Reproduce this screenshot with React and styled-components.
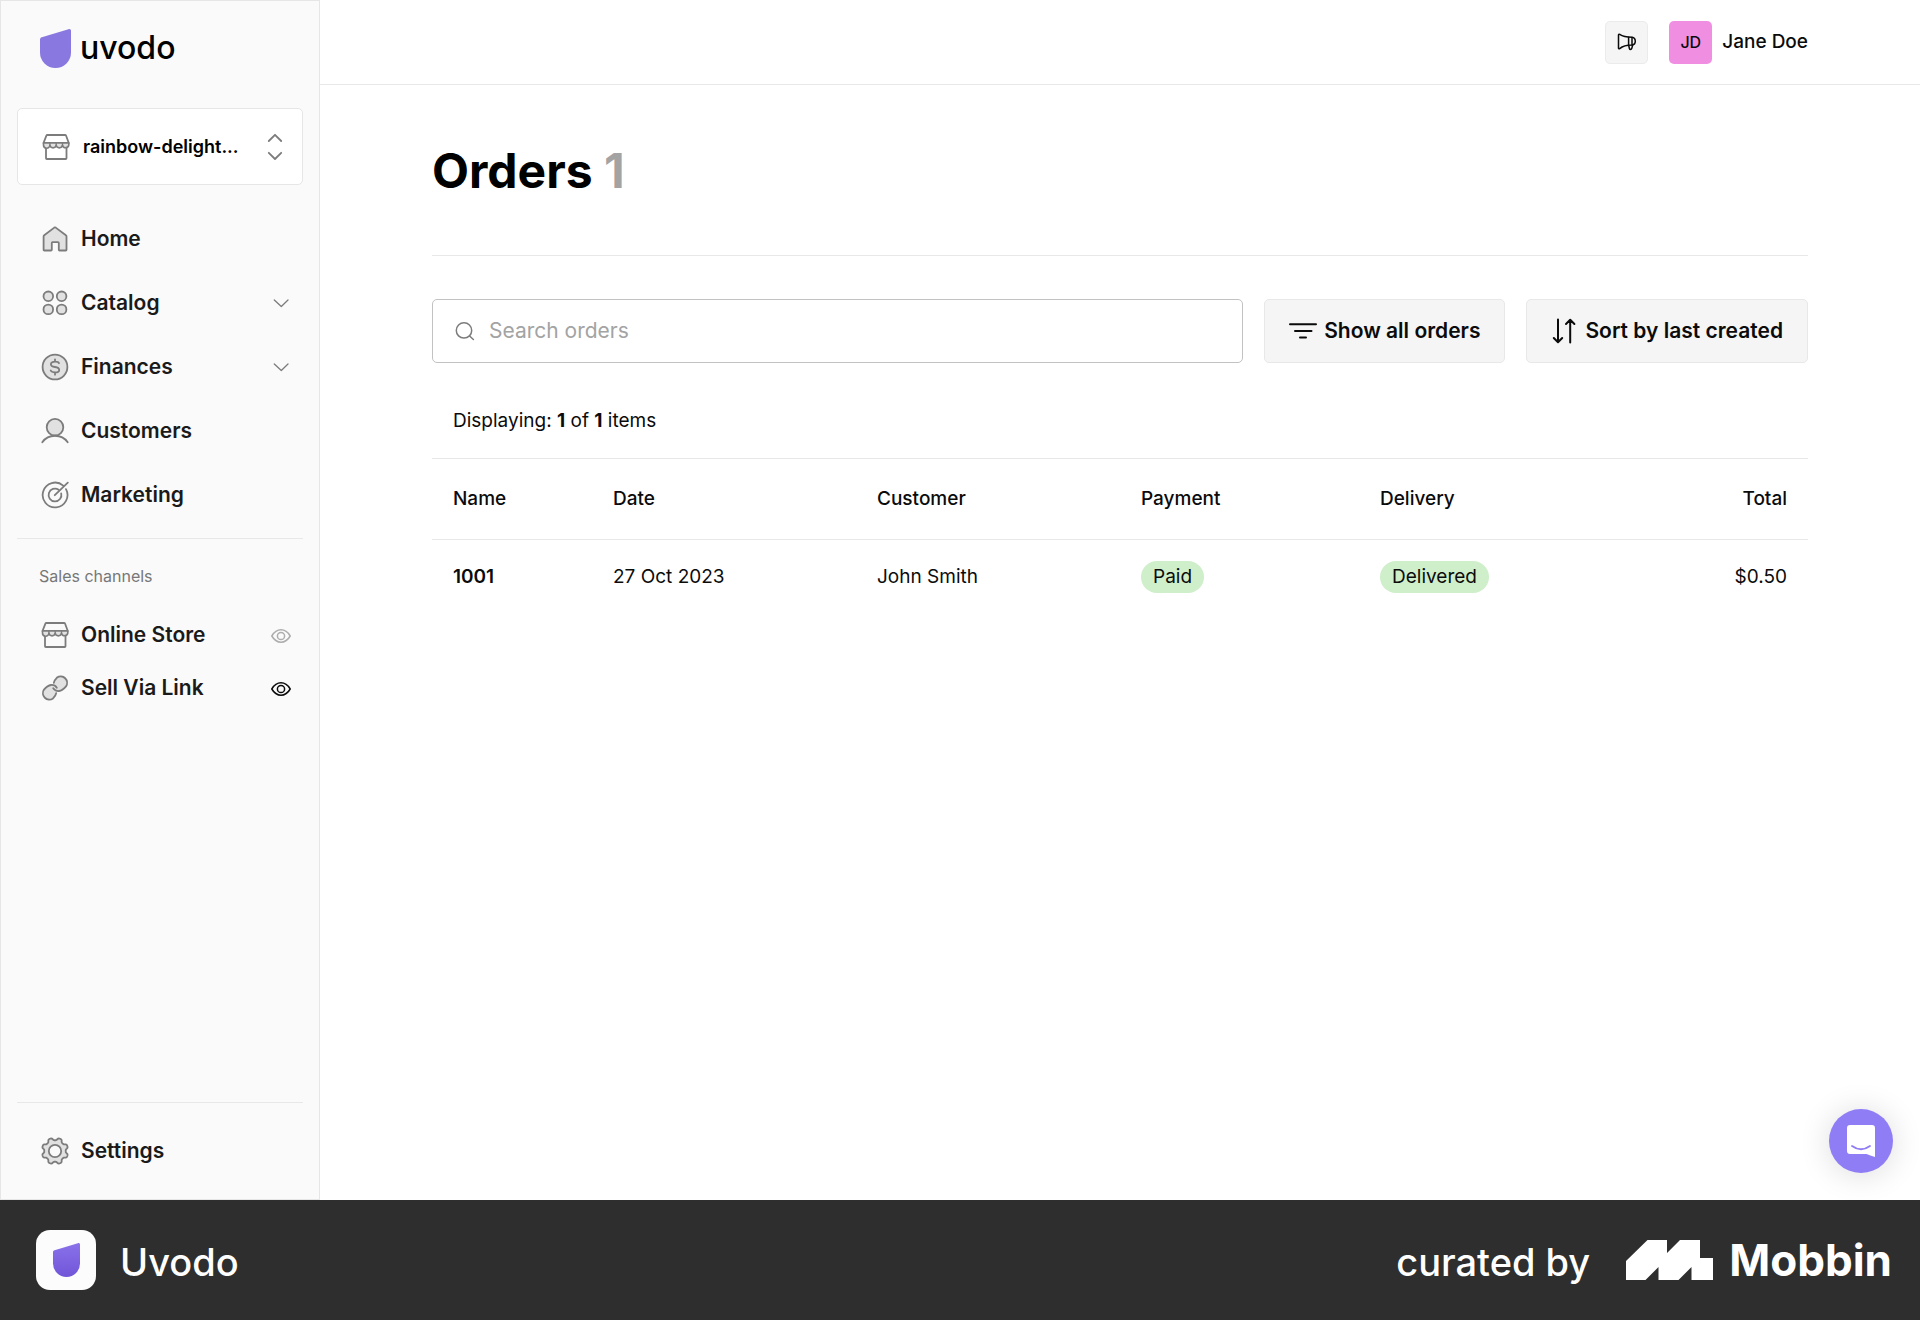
import React from "react";
import styled, { createGlobalStyle } from "styled-components";

const GlobalStyle = createGlobalStyle`
  * {
    box-sizing: border-box;
  }

  body {
    margin: 0;
    color: #0b0b0b;
    background: #fff;
    font-family: Inter, "Liberation Sans", sans-serif;
    font-size: 19px;
    line-height: 24px;
  }

  button,
  input {
    font: inherit;
    color: inherit;
  }

  svg {
    display: block;
    flex: none;
    fill: none;
    stroke-linecap: round;
    stroke-linejoin: round;
  }
`;

const Page = styled.div`
  display: flex;
  flex-direction: column;
  min-height: 100vh;
`;

const Workspace = styled.div`
  display: flex;
  flex: 1;
`;

const Sidebar = styled.aside`
  display: flex;
  flex-direction: column;
  width: 320px;
  flex: none;
  padding: 27px 16px 16px;
  border: 1px solid #e6e6e6;
  background: #fafafa;
`;

const Brand = styled.a`
  display: flex;
  align-items: center;
  gap: 9px;
  height: 40px;
  margin-bottom: 40px;
  padding-left: 23px;
  color: #000;
  font-size: 32px;
  font-weight: 500;
  text-decoration: none;
`;

const StoreButton = styled.button`
  display: flex;
  align-items: center;
  gap: 13px;
  height: 77px;
  margin-bottom: 22px;
  padding: 0 19px 0 24px;
  border: 1px solid #e6e6e6;
  border-radius: 5px;
  background: #fff;
  color: #000;
  font-size: 18px;
  font-weight: 600;
  text-align: left;
`;

const StoreName = styled.span`
  flex: 1;
  white-space: nowrap;
`;

const Nav = styled.nav`
  display: flex;
  flex-direction: column;
`;

const NavLink = styled.a`
  display: flex;
  align-items: center;
  gap: 12px;
  height: ${(props) => (props.$compact ? "53px" : "64px")};
  padding: 0 12px 0 24px;
  color: #1a1a1a;
  font-size: 21px;
  font-weight: 600;
  text-decoration: none;
`;

const NavLabel = styled.span`
  flex: 1;
`;

const Divider = styled.hr`
  width: 100%;
  height: 1px;
  margin: ${(props) => props.$margin || "0"};
  border: 0;
  background: #e8e8e8;
`;

const SectionLabel = styled.h2`
  margin: 0 0 20px;
  padding-left: 22px;
  color: #777;
  font-size: 16px;
  font-weight: 400;
`;

const SidebarBottom = styled.div`
  margin-top: auto;
`;

const Main = styled.main`
  position: relative;
  flex: 1;
  min-width: 0;
`;

const Topbar = styled.header`
  display: flex;
  align-items: center;
  justify-content: flex-end;
  gap: 21px;
  height: 85px;
  padding: 0 112px;
  border-bottom: 1px solid #e8e8e8;
`;

const NewsButton = styled.button`
  display: grid;
  place-items: center;
  width: 43px;
  height: 43px;
  padding: 0;
  border: 1px solid #ebebeb;
  border-radius: 5px;
  background: #f5f5f5;
`;

const User = styled.div`
  display: flex;
  align-items: center;
  gap: 10px;
  font-weight: 500;
`;

const Avatar = styled.span`
  display: grid;
  place-items: center;
  width: 43px;
  height: 43px;
  border-radius: 5px;
  background: #f08fe2;
  font-size: 16px;
`;

const Content = styled.div`
  padding: 0 112px;
`;

const Title = styled.h1`
  margin: 0;
  padding: 54px 0 52px;
  border-bottom: 1px solid #e8e8e8;
  color: #000;
  font-size: 48px;
  font-weight: 700;
  line-height: 64px;
`;

const Count = styled.span`
  color: #a3a3a3;
`;

const Toolbar = styled.div`
  display: flex;
  gap: 21px;
  margin: 43px 0 46px;
`;

const SearchBox = styled.label`
  display: flex;
  align-items: center;
  flex: 1;
  gap: 14px;
  height: 64px;
  padding: 0 22px;
  border: 1px solid #c2c2c2;
  border-radius: 5px;
`;

const SearchInput = styled.input`
  flex: 1;
  min-width: 0;
  padding: 0;
  border: 0;
  outline: 0;
  background: none;
  font-size: 21px;

  &::placeholder {
    color: #a3a3a3;
    opacity: 1;
  }
`;

const ToolButton = styled.button`
  display: flex;
  align-items: center;
  gap: 7px;
  height: 64px;
  padding: 0 24px;
  border: 1px solid #e8e8e8;
  border-radius: 5px;
  background: #f5f5f5;
  font-size: 21px;
  font-weight: 600;
  white-space: nowrap;
`;

const Summary = styled.p`
  margin: 0 0 25px;
  padding: 0 21px;
`;

const Table = styled.table`
  width: 100%;
  border-collapse: collapse;
  table-layout: fixed;
`;

const Column = styled.col`
  width: ${(props) => props.$width};
`;

const HeadCell = styled.th`
  height: 81px;
  padding: 0 21px;
  border: 1px solid #e8e8e8;
  border-width: 1px 0;
  font-weight: 500;
  text-align: ${(props) => props.$align || "left"};
`;

const Cell = styled.td`
  height: 75px;
  padding: 0 21px;
  font-weight: ${(props) => (props.$strong ? 600 : 400)};
  text-align: ${(props) => props.$align || "left"};
`;

const Badge = styled.span`
  display: inline-block;
  padding: 4px 12px;
  border-radius: 16px;
  background: #cfeeca;
`;

const ChatButton = styled.button`
  position: absolute;
  right: 27px;
  bottom: 27px;
  display: grid;
  place-items: center;
  width: 64px;
  height: 64px;
  padding: 0;
  border: 0;
  border-radius: 50%;
  background: #8f7df6;
  box-shadow: 0 2px 32px rgba(0, 0, 0, 0.14);
`;

const Footer = styled.footer`
  display: flex;
  align-items: center;
  justify-content: space-between;
  height: 120px;
  padding: 0 28px 0 36px;
  background: #2e2e2e;
  color: #fff;
`;

const FooterGroup = styled.div`
  display: flex;
  align-items: center;
  gap: ${(props) => props.$gap};
`;

const FooterText = styled.span`
  padding-top: 4px;
  font-size: 38px;
  font-weight: 500;
  line-height: 48px;
`;

const AppTile = styled.span`
  display: grid;
  place-items: center;
  width: 60px;
  height: 60px;
  border-radius: 14px;
  background: #fcfcfc;
`;

const MobbinName = styled.span`
  font-size: 44px;
  font-weight: 700;
  line-height: 48px;
`;

const gray = { stroke: "#7c7c7c", strokeWidth: 1.8 };
const soft = "#e1e1e1";

function UvodoMark({ width, height, gradient }) {
  return (
    <svg width={width} height={height} viewBox="0 0 31 39">
      {gradient && (
        <defs>
          <linearGradient id="mark" x1="0" y1="0" x2="0" y2="1">
            <stop offset="0" stopColor="#8a72ea" />
            <stop offset="1" stopColor="#7155d8" />
          </linearGradient>
        </defs>
      )}
      <path
        fill={gradient ? "url(#mark)" : "#8878df"}
        d="M0 10.6C0 9.4.6 8.6 1.8 8.2L28.5.2C30 -.2 31 .5 31 2V23.5a15.5 15.5 0 0 1-31 0Z"
      />
    </svg>
  );
}

function StoreIcon() {
  return (
    <svg width="28" height="28" {...gray}>
      <path d="M4 13.5V25.2Q4 26 4.8 26H23.7Q24.5 26 24.5 25.2V13.5" />
      <path d="M4.3 2.8Q4.6 2 5.4 2H23Q23.8 2 24.1 2.8L26.8 10H1.5Z" />
      <path
        fill={soft}
        strokeWidth="1.6"
        d="M1.5 10H26.8V11.8A3.2 3.2 0 0 1 20.5 12.2A3.2 3.2 0 0 1 14.2 12.2A3.2 3.2 0 0 1 7.9 12.2A3.2 3.2 0 0 1 1.5 11.8Z"
      />
      <path strokeWidth="1.4" d="M7.9 10V12.2M14.2 10V12.2M20.5 10V12.2" />
    </svg>
  );
}

function HomeIcon() {
  return (
    <svg width="28" height="28" {...gray}>
      <path
        fill={soft}
        d="M2.6 11.4Q2.6 10.7 3.2 10.3L13.3 2.6Q14 2.1 14.7 2.6L24.9 10.3Q25.5 10.7 25.5 11.4V24.8Q25.5 25.5 24.8 25.5H18.6Q17.8 25.5 17.8 24.8V18Q17.8 17.2 17 17.2H11.6Q10.8 17.2 10.8 18V24.8Q10.8 25.5 10 25.5H3.4Q2.6 25.5 2.6 24.8Z"
      />
    </svg>
  );
}

function CatalogIcon() {
  return (
    <svg width="28" height="28" {...gray}>
      <g fill={soft}>
        <circle cx="7.3" cy="7.3" r="4.8" />
        <circle cx="20.6" cy="7.3" r="4.8" />
        <circle cx="7.3" cy="20.4" r="4.8" />
        <circle cx="20.6" cy="20.4" r="4.8" />
      </g>
    </svg>
  );
}

function FinancesIcon() {
  return (
    <svg width="28" height="28" {...gray}>
      <circle cx="14" cy="14" r="12.4" fill={soft} />
      <path d="M18 10.2C17.5 9 16.4 8.7 14.3 8.7C11.5 8.7 9.9 9.4 9.9 11.3C9.9 13.2 11.5 13.7 14 14C16.6 14.4 18.2 15 18.2 16.9C18.2 18.7 16.7 19.4 14.2 19.4C11.6 19.4 10.3 18.9 9.7 17.5M14 6.3V8.7M14 19.4V21.7" />
    </svg>
  );
}

function CustomersIcon() {
  return (
    <svg width="28" height="28" {...gray}>
      <circle cx="14" cy="10.2" r="8.3" fill={soft} />
      <path d="M1.3 25.2C7.4 16.6 20.6 16.6 26.7 25.2" />
    </svg>
  );
}

function MarketingIcon() {
  return (
    <svg width="28" height="28" {...gray}>
      <path d="M22.2 4.6A12.4 12.4 0 1 0 25 8.1" />
      <path d="M17.6 8.7A6.4 6.4 0 1 0 20.2 12.4" />
      <path d="M13.8 14.2L26.8 1.6" />
    </svg>
  );
}

const linkUpper =
  "M12.8 8.8C13 7.3 14 5.6 16 3.6A6.4 6.4 0 0 1 25 12.4C23 14.8 21 16.7 18 17C15.5 17.2 13.3 16 12.2 14.3";
const linkLower =
  "M15.2 19.2C15 20.7 14 22.4 12 24.4A6.4 6.4 0 0 1 3 15.6C5 13.2 7 11.3 10 11C12.5 10.8 14.7 12 15.8 13.7";

function LinkIcon() {
  return (
    <svg width="28" height="28" {...gray}>
      <path fill={soft} stroke="none" d={linkUpper + linkLower} />
      <path d={linkUpper + linkLower} />
    </svg>
  );
}

// eight rounded teeth, with a notch pointing straight up
const gearPath =
  Array.from({ length: 128 }, (_, i) => {
    const angle = (i / 128) * Math.PI * 2;
    const radius = 12 - 1.3 * Math.tanh(2 * Math.cos(angle * 8));
    const x = 14 + radius * Math.sin(angle);
    const y = 14 - radius * Math.cos(angle);
    return `${i ? "L" : "M"}${x.toFixed(2)} ${y.toFixed(2)}`;
  }).join("") + "Z";

function SettingsIcon() {
  return (
    <svg width="28" height="28" {...gray}>
      <path d={gearPath} fill={soft} />
      <circle cx="14" cy="14" r="6.2" fill="#fafafa" />
    </svg>
  );
}

function ChevronIcon() {
  return (
    <svg width="20" height="20" stroke="#7c7c7c" strokeWidth="1.3">
      <path d="M3.3 7L10.3 13.5L17 7" />
    </svg>
  );
}

function UpDownIcon() {
  return (
    <svg width="16" height="28" stroke="#7c7c7c" strokeWidth="1.8">
      <path d="M1.8 8L8 1.8L14.2 8M1.8 19.8L8 26L14.2 19.8" />
    </svg>
  );
}

function EyeIcon({ color }) {
  return (
    <svg width="20" height="16" stroke={color} strokeWidth="1.5">
      <path d="M.8 9Q4.4 2.8 10 2.8T19.2 9Q15.6 15.2 10 15.2T.8 9Z" />
      <circle cx="10" cy="9" r="3.6" />
    </svg>
  );
}

function MegaphoneIcon() {
  return (
    <svg width="20" height="20" stroke="#0b0b0b" strokeWidth="1.5">
      <path d="M1.5 3.2Q1.5 1.8 2.7 2.4C6 4.6 9 5.2 15 5.3A3.9 3.9 0 0 1 15 13C9 13 6 13.8 2.7 16.6Q1.5 17.2 1.5 15.9Z" />
      <path d="M11.6 5.3V13L12.4 16.5Q12.6 17.5 13.6 17.5Q14.4 17.5 14.7 16.6L15.7 13M15 5.4V13" />
    </svg>
  );
}

function SearchIcon() {
  return (
    <svg width="20" height="20" stroke="#7c7c7c" strokeWidth="1.5">
      <circle cx="9" cy="9.4" r="7.7" />
      <path d="M14.6 15L18.4 18.5" />
    </svg>
  );
}

function FilterIcon() {
  return (
    <svg width="28" height="20" stroke="#0b0b0b" strokeWidth="2">
      <path d="M1 3.3H27M6 10H22.5M11 16.5H17" />
    </svg>
  );
}

function SortIcon() {
  return (
    <svg width="27" height="26" stroke="#0b0b0b" strokeWidth="2">
      <path d="M7 1.5V24M2.8 20L7 24.2L11.2 20M19.2 24.5V2M15 6L19.2 1.8L23.4 6" />
    </svg>
  );
}

function ChatIcon() {
  return (
    <svg width="30" height="34" viewBox="0 0 30 34">
      <path
        fill="#fff"
        d="M4 1H26Q29 1 29 4V33Q24 31.6 20.5 30H4Q1 30 1 27V4Q1 1 4 1Z"
      />
      <path stroke="#8f7df6" strokeWidth="1.8" d="M6 22Q15 28.5 24 22" />
    </svg>
  );
}

function MobbinLogo() {
  return (
    <svg width="87" height="40" viewBox="0 0 87 40">
      <path
        fill="#fff"
        d="M0 21L21.5 0H41V13L54 0H74V18H87V40H65.5V27L52.5 40H32.5V27L19.5 40H0Z"
      />
    </svg>
  );
}

const navItems = [
  { label: "Home", Icon: HomeIcon },
  { label: "Catalog", Icon: CatalogIcon, expandable: true },
  { label: "Finances", Icon: FinancesIcon, expandable: true },
  { label: "Customers", Icon: CustomersIcon },
  { label: "Marketing", Icon: MarketingIcon },
];

const channels = [
  { label: "Online Store", Icon: StoreIcon, eye: "#adadad" },
  { label: "Sell Via Link", Icon: LinkIcon, eye: "#0b0b0b" },
];

const orders = [
  {
    name: "1001",
    date: "27 Oct 2023",
    customer: "John Smith",
    payment: "Paid",
    delivery: "Delivered",
    total: "$0.50",
  },
];

export default function App() {
  return (
    <Page>
      <GlobalStyle />
      <Workspace>
        <Sidebar>
          <Brand href="#">
            <UvodoMark width={31} height={39} />
            uvodo
          </Brand>
          <StoreButton type="button">
            <StoreIcon />
            <StoreName>rainbow-delight...</StoreName>
            <UpDownIcon />
          </StoreButton>
          <Nav>
            {navItems.map(({ label, Icon, expandable }) => (
              <NavLink href="#" key={label}>
                <Icon />
                <NavLabel>{label}</NavLabel>
                {expandable && <ChevronIcon />}
              </NavLink>
            ))}
          </Nav>
          <Divider $margin="11px 0 25px" />
          <SectionLabel>Sales channels</SectionLabel>
          <Nav>
            {channels.map(({ label, Icon, eye }) => (
              <NavLink href="#" key={label} $compact>
                <Icon />
                <NavLabel>{label}</NavLabel>
                <EyeIcon color={eye} />
              </NavLink>
            ))}
          </Nav>
          <SidebarBottom>
            <Divider $margin="0 0 16px" />
            <NavLink href="#">
              <SettingsIcon />
              <NavLabel>Settings</NavLabel>
            </NavLink>
          </SidebarBottom>
        </Sidebar>
        <Main>
          <Topbar>
            <NewsButton type="button" aria-label="News">
              <MegaphoneIcon />
            </NewsButton>
            <User>
              <Avatar>JD</Avatar>
              Jane Doe
            </User>
          </Topbar>
          <Content>
            <Title>
              Orders <Count>1</Count>
            </Title>
            <Toolbar>
              <SearchBox>
                <SearchIcon />
                <SearchInput
                  type="text"
                  name="search"
                  placeholder="Search orders"
                  aria-label="Search orders"
                />
              </SearchBox>
              <ToolButton type="button">
                <FilterIcon />
                Show all orders
              </ToolButton>
              <ToolButton type="button">
                <SortIcon />
                Sort by last created
              </ToolButton>
            </Toolbar>
            <Summary>
              Displaying: <b>1</b> of <b>1</b> items
            </Summary>
            <Table>
              <colgroup>
                <Column $width="160px" />
                <Column $width="264px" />
                <Column $width="264px" />
                <Column $width="239px" />
                <Column $width="239px" />
                <Column />
              </colgroup>
              <thead>
                <tr>
                  <HeadCell>Name</HeadCell>
                  <HeadCell>Date</HeadCell>
                  <HeadCell>Customer</HeadCell>
                  <HeadCell>Payment</HeadCell>
                  <HeadCell>Delivery</HeadCell>
                  <HeadCell $align="right">Total</HeadCell>
                </tr>
              </thead>
              <tbody>
                {orders.map((order) => (
                  <tr key={order.name}>
                    <Cell $strong>{order.name}</Cell>
                    <Cell>{order.date}</Cell>
                    <Cell>{order.customer}</Cell>
                    <Cell>
                      <Badge>{order.payment}</Badge>
                    </Cell>
                    <Cell>
                      <Badge>{order.delivery}</Badge>
                    </Cell>
                    <Cell $align="right">{order.total}</Cell>
                  </tr>
                ))}
              </tbody>
            </Table>
          </Content>
          <ChatButton type="button" aria-label="Chat">
            <ChatIcon />
          </ChatButton>
        </Main>
      </Workspace>
      <Footer>
        <FooterGroup $gap="24px">
          <AppTile>
            <UvodoMark width={27} height={34} gradient />
          </AppTile>
          <FooterText>Uvodo</FooterText>
        </FooterGroup>
        <FooterGroup $gap="36px">
          <FooterText>curated by</FooterText>
          <FooterGroup $gap="16px">
            <MobbinLogo />
            <MobbinName>Mobbin</MobbinName>
          </FooterGroup>
        </FooterGroup>
      </Footer>
    </Page>
  );
}
